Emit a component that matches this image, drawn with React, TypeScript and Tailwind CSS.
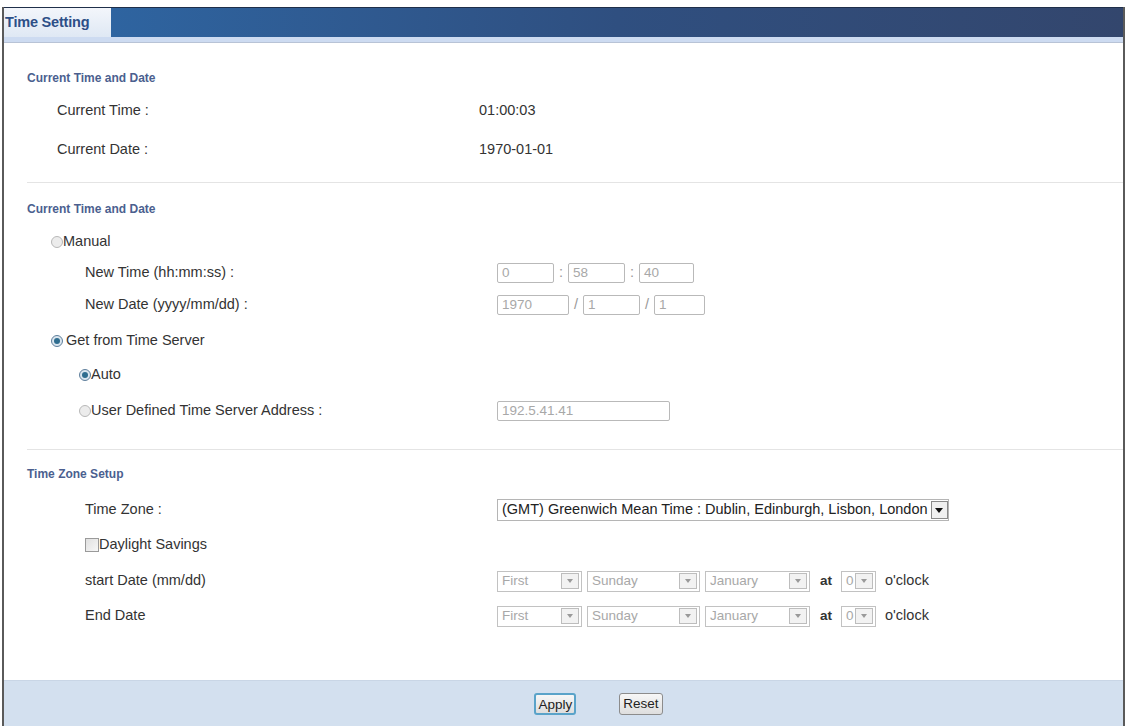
import type { ReactNode } from "react"

function Radio({ checked }: { checked?: boolean }) {
  return (
    <span
      className={`inline-flex h-[12px] w-[12px] shrink-0 items-center justify-center rounded-full border ${
        checked ? "border-[#5f7f9c] bg-[#dbe6ef]" : "border-[#b8b8b8] bg-[#ececec]"
      }`}
    >
      {checked && <span className="h-[6px] w-[6px] rounded-full bg-[#2f6d8f]" />}
    </span>
  )
}

function TextBox({ value, w }: { value: string; w: string }) {
  return (
    <span
      className={`inline-flex h-[20px] ${w} items-center rounded-[2px] border border-[#b9b9b9] bg-white px-[4px] text-[13.5px] text-[#a8a8a8]`}
    >
      {value}
    </span>
  )
}

function Select({ value, w }: { value: string; w: string }) {
  return (
    <span
      className={`inline-flex h-[21px] ${w} items-center justify-between border border-[#c2c2c2] bg-white pl-[4px] pr-[2px] text-[13.5px] text-[#a8a8a8]`}
    >
      <span>{value}</span>
      <span className="flex h-[16px] w-[18px] items-center justify-center border border-[#bdbdbd] bg-[#f2f2f2]">
        <span className="h-0 w-0 border-x-[3px] border-t-[4px] border-x-transparent border-t-[#9a9a9a]" />
      </span>
    </span>
  )
}

function Row({ label, indent, children, mt }: { label: ReactNode; indent: string; children?: ReactNode; mt: string }) {
  return (
    <div className={`flex h-6 items-center ${mt}`}>
      <div className={`flex w-[493px] shrink-0 items-center ${indent}`}>{label}</div>
      <div className="flex items-center">{children}</div>
    </div>
  )
}

function Heading({ children, mt }: { children: ReactNode; mt: string }) {
  return (
    <div className={`flex h-6 items-center pl-[23px] text-[12px] font-bold text-[#4b5f8f] ${mt}`}>{children}</div>
  )
}

export default function App() {
  return (
    <div className="h-[726px] w-[1126px] overflow-hidden bg-white font-['Liberation_Sans',Arial,sans-serif] text-[14.5px] text-[#333]">
      <div className="h-[7px]" />

      <div className="ml-[2px] mr-[1px] flex h-[719px] flex-col border-x-[2px] border-[#5a5a5a]">
        {/* tab bar */}
        <div className="flex h-[30px] shrink-0 border-t border-[#1f2f4a]">
          <div className="flex w-[107px] items-center bg-gradient-to-b from-[#f3f6fb] to-[#dfe8f4] pl-[1px] text-[14.5px] font-bold tracking-[-0.2px] text-[#2d4f87]">
            Time Setting
          </div>
          <div className="flex-1 bg-gradient-to-r from-[#2e64a0] via-[#2f4f80] to-[#33466d]" />
        </div>
        <div className="h-[6px] shrink-0 border-b border-[#b8c3d6] bg-[#cddbf1]" />

        {/* content */}
        <div className="flex-1">
          <Heading mt="mt-[23px]">Current Time and Date</Heading>
          <Row mt="mt-[9px]" indent="pl-[53px]" label="Current Time :">
            <span className="-ml-[18px]">01:00:03</span>
          </Row>
          <Row mt="mt-[15px]" indent="pl-[53px]" label="Current Date :">
            <span className="-ml-[18px]">1970-01-01</span>
          </Row>
          <div className="ml-[23px] mt-[20px] h-px bg-[#e4e4e4]" />

          <Heading mt="mt-[14px]">Current Time and Date</Heading>
          <Row
            mt="mt-[9px]"
            indent="pl-[47px]"
            label={
              <>
                <Radio />
                <span>Manual</span>
              </>
            }
          />
          <Row mt="mt-[7px]" indent="pl-[81px]" label="New Time (hh:mm:ss) :">
            <TextBox value="0" w="w-[57px]" />
            <span className="mx-[5px] text-[#999]">:</span>
            <TextBox value="58" w="w-[57px]" />
            <span className="mx-[5px] text-[#999]">:</span>
            <TextBox value="40" w="w-[55px]" />
          </Row>
          <Row mt="mt-[8px]" indent="pl-[81px]" label="New Date (yyyy/mm/dd) :">
            <TextBox value="1970" w="w-[72px]" />
            <span className="mx-[5px] text-[#999]">/</span>
            <TextBox value="1" w="w-[57px]" />
            <span className="mx-[5px] text-[#999]">/</span>
            <TextBox value="1" w="w-[51px]" />
          </Row>
          <Row
            mt="mt-[12px]"
            indent="pl-[47px]"
            label={
              <>
                <Radio checked />
                <span className="ml-[3px]">Get from Time Server</span>
              </>
            }
          />
          <Row
            mt="mt-[10px]"
            indent="pl-[75px]"
            label={
              <>
                <Radio checked />
                <span>Auto</span>
              </>
            }
          />
          <Row
            mt="mt-[12px]"
            indent="pl-[75px]"
            label={
              <>
                <Radio />
                <span>User Defined Time Server Address :</span>
              </>
            }
          >
            <TextBox value="192.5.41.41" w="w-[173px]" />
          </Row>
          <div className="ml-[23px] mt-[26px] h-px bg-[#e4e4e4]" />

          <Heading mt="mt-[12px]">Time Zone Setup</Heading>
          <Row mt="mt-[12px]" indent="pl-[81px]" label="Time Zone :">
            <span className="inline-flex h-[22px] items-center border border-[#b5b5b5] bg-white pl-[4px] text-[14.5px] text-[#222]">
              (GMT) Greenwich Mean Time : Dublin, Edinburgh, Lisbon, London
              <span className="ml-[3px] flex h-[18px] w-[17px] items-center justify-center border border-[#8a8a8a] bg-[#f0f0f0]">
                <span className="h-0 w-0 border-x-[4px] border-t-[5px] border-x-transparent border-t-[#111]" />
              </span>
            </span>
          </Row>
          <Row
            mt="mt-[11px]"
            indent="pl-[81px]"
            label={
              <>
                <span className="h-[14px] w-[14px] border border-[#9a9a9a] bg-gradient-to-br from-[#e0e0e0] to-[#f7f7f7]" />
                <span>Daylight Savings</span>
              </>
            }
          />
          <Row mt="mt-[12px]" indent="pl-[81px]" label="start Date (mm/dd)">
            <Select value="First" w="w-[85px]" />
            <span className="w-[5px]" />
            <Select value="Sunday" w="w-[113px]" />
            <span className="w-[5px]" />
            <Select value="January" w="w-[105px]" />
            <span className="ml-[10px] mr-[9px] text-[13.5px] font-bold">at</span>
            <Select value="0" w="w-[35px]" />
            <span className="ml-[9px] text-[14.5px]">o'clock</span>
          </Row>
          <Row mt="mt-[11px]" indent="pl-[81px]" label="End Date">
            <Select value="First" w="w-[85px]" />
            <span className="w-[5px]" />
            <Select value="Sunday" w="w-[113px]" />
            <span className="w-[5px]" />
            <Select value="January" w="w-[105px]" />
            <span className="ml-[10px] mr-[9px] text-[13.5px] font-bold">at</span>
            <Select value="0" w="w-[35px]" />
            <span className="ml-[9px] text-[14.5px]">o'clock</span>
          </Row>
        </div>

        {/* footer */}
        <div className="flex h-[46px] shrink-0 items-center justify-center gap-[43px] border-t border-[#c9d6e6] bg-[#d3e0ef] pl-[70px]">
          <button className="h-[22px] rounded-[3px] border-2 border-[#5aa3c9] bg-gradient-to-b from-[#f7f7f7] to-[#dedede] px-[2px] text-[13.5px] text-[#222]">
            Apply
          </button>
          <button className="h-[22px] rounded-[3px] border border-[#8c8c8c] bg-gradient-to-b from-[#f7f7f7] to-[#dedede] px-[3px] text-[13.5px] text-[#222]">
            Reset
          </button>
        </div>
      </div>
    </div>
  )
}
